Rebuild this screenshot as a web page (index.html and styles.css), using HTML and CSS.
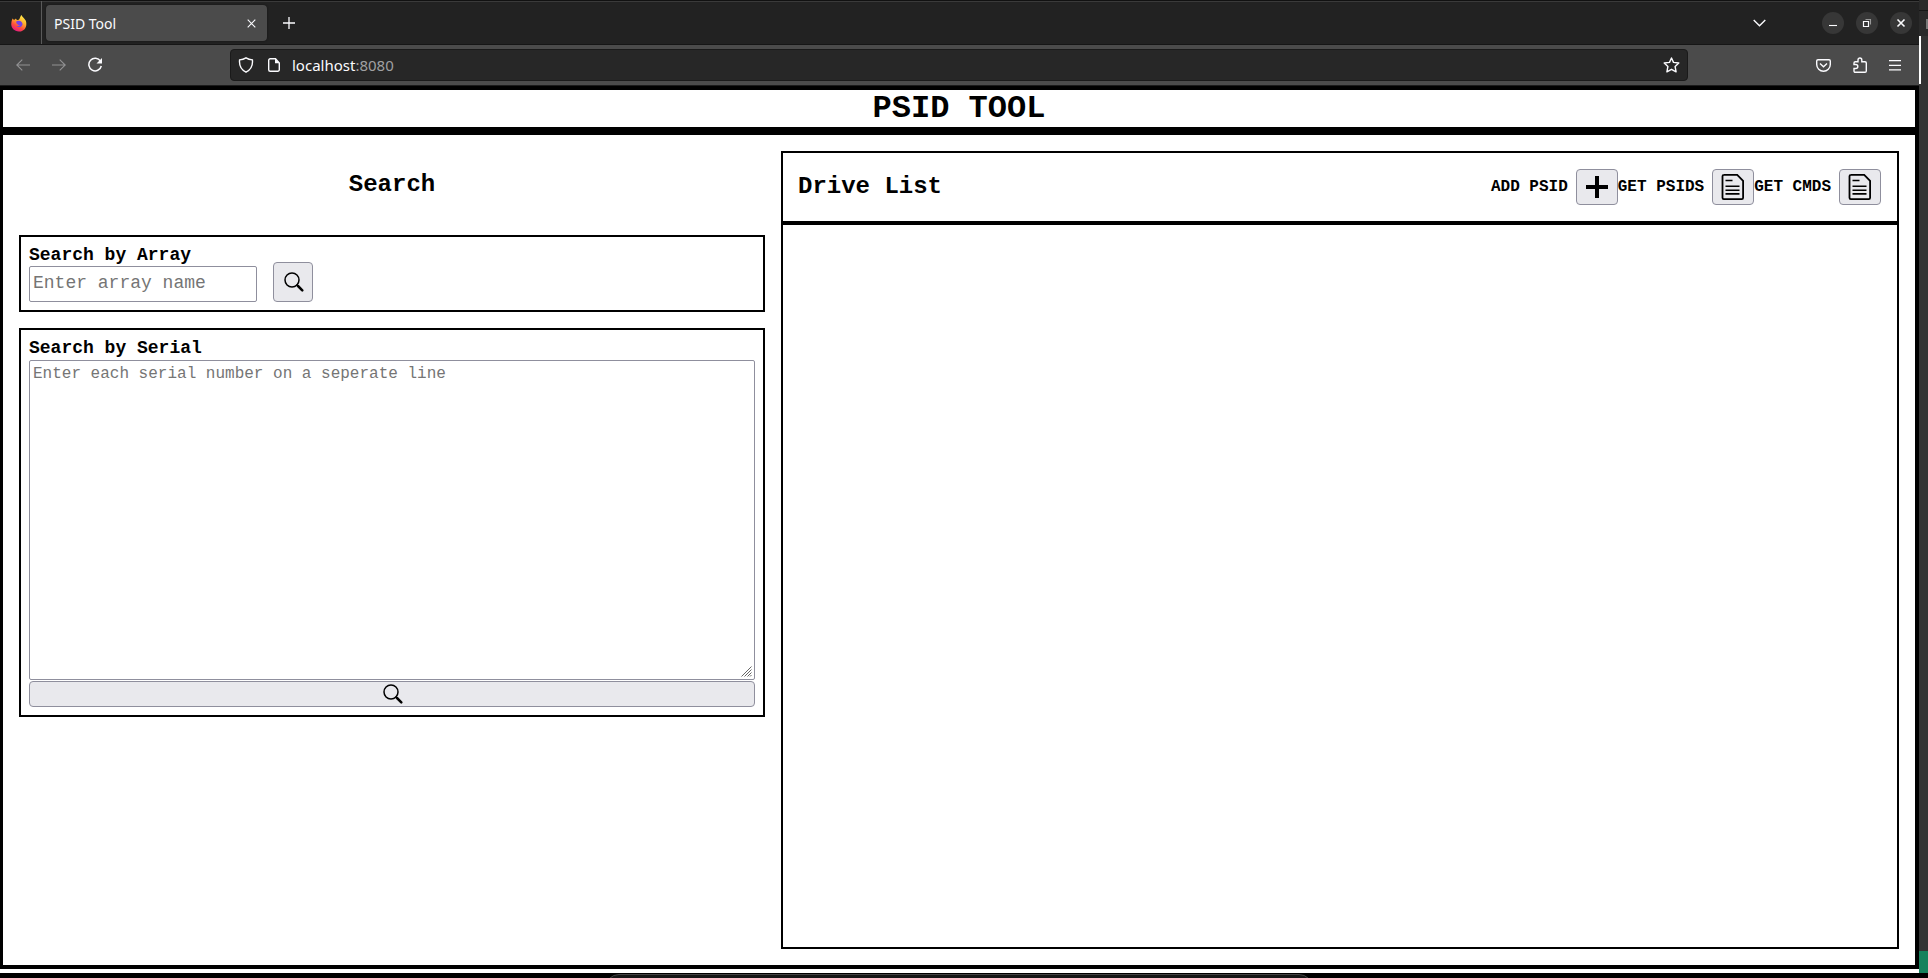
FILE: index.html
```html
<!DOCTYPE html>
<html lang="en">
<head>
<meta charset="utf-8">
<title>PSID Tool</title>
<link rel="stylesheet" href="styles.css">
</head>
<body>
<div class="screen">
<div class="desktop">
  <div class="window">
    <div class="tabbar">
      <div class="pinned">
        <svg width="16" height="17" viewBox="0 0 16 17"><defs><linearGradient id="fx" x1=".8" y1="0" x2=".3" y2="1"><stop offset="0" stop-color="#fff44f"/><stop offset=".4" stop-color="#ffb02a"/><stop offset=".7" stop-color="#ff4f3b"/><stop offset="1" stop-color="#e31587"/></linearGradient></defs><path d="M1.6 3.6 3 5l2-1.600C5.200 4.500 6 5 7 5c2 0 1.500-3 3.500-5 .4 2 3 3 4.200 5.600C16.500 10 14.500 16.300 8.300 16.500 3 16.700-.2 12.500.3 8.500.4 6.500.9 5 1.600 3.600Z" fill="url(#fx)"/><path d="M5.500 6.200c3.500-1.500 6.400.8 6 3.400-.5 2.800-4.500 3.500-6.200 1.200 1.500.5 2.900.1 3.700-.9-1.500.2-2.200-.4-3-1.200-.6-.7-1.200-1.600-.5-2.500Z" fill="#7542e5"/></svg>
      </div>
      <div class="tab"><span>PSID Tool</span>
        <svg width="9" height="9" viewBox="0 0 9 9" class="ln"><path d="M.7.7l7.600 7.600M8.300.7.700 8.300"/></svg>
      </div>
      <svg class="ln newtab" width="12" height="12" viewBox="0 0 12 12"><path d="M6 0v12M0 6h12" stroke-width="1.300"/></svg>
      <div class="controls">
        <svg class="ln chev" width="13" height="8" viewBox="0 0 13 8"><path d="M.7 1l5.800 5.700L12.300 1" stroke-width="1.400"/></svg>
        <div class="round"><svg class="ln" width="22" height="22"><path d="M7 13.500h8"/></svg></div>
        <div class="round"><svg class="ln" width="22" height="22"><path d="M9.500 7.500h5v5" stroke="#999"/><path d="M7.500 9.500h5v5h-5z" stroke-width="1.200"/></svg></div>
        <div class="round"><svg class="ln" width="22" height="22"><path d="M7.500 7.500l7 7M14.500 7.500l-7 7" stroke-width="1.600"/></svg></div>
      </div>
    </div>
    <div class="toolbar">
      <svg class="ln dim back" width="14" height="12" viewBox="0 0 14 12"><path d="M14 6H.7M6.300.6.800 6l5.500 5.400"/></svg>
      <svg class="ln dim fwd" width="14" height="12" viewBox="0 0 14 12"><path d="M0 6h13.300M7.700.6l5.500 5.400-5.500 5.400"/></svg>
      <svg class="ln reload" width="15" height="16" viewBox="0 0 15 16"><path d="M12.500 4.200A6.300 6.300 0 1 0 13.300 9" stroke-width="1.500"/><path d="M14 1v5.500H8.500z" fill="#fbfbfe" stroke="none"/></svg>
      <div class="urlbar">
        <svg class="ln" width="16" height="16" viewBox="0 0 16 16"><path d="M8 .8c2 1.300 4.100 1.900 6.400 2.100.6 5.500-1.800 10-6.400 12.300C3.400 12.900 1 8.400 1.600 2.900 3.900 2.700 6 2.100 8 .8Z" stroke-width="1.400"/></svg>
        <svg class="ln page" width="12" height="14" viewBox="0 0 12 14"><path d="M7.500.7H2.200A1.500 1.500 0 0 0 .7 2.200v9.600a1.500 1.500 0 0 0 1.500 1.500h7.600a1.500 1.500 0 0 0 1.500-1.500V5z" stroke-width="1.400"/><path d="M7 .5 11.700 5.300H7z" fill="#fbfbfe" stroke="none"/></svg>
        <span class="url">localhost<i>:8080</i></span>
        <svg class="ln star" width="17" height="16" viewBox="0 0 17 16"><path d="M8.500 1l2 4.400 5.300.6-3.700 3.500 1 5.300-4.600-2.500-4.600 2.500 1-5.300L1.200 6l5.300-.6z" stroke-width="1.400" stroke-linejoin="round"/></svg>
      </div>
      <div class="tools">
        <svg class="ln" width="15" height="13" viewBox="0 0 15 13"><path d="M2 .7h11q1.300 0 1.300 1.300v3.500a6.800 6.800 0 0 1-13.600 0V2Q.7.7 2 .7Z" stroke-width="1.400"/><path d="M4 4.500l3.500 3.300L11 4.500" stroke-width="1.400"/></svg>
        <svg class="ln" width="14" height="16" viewBox="0 0 14 16"><path d="M1 7.500V6q0-1.300 1.300-1.300H5V2.900a1.900 1.900 0 0 1 3.800 0v1.800h3.200q1.300 0 1.300 1.300v8q0 1.300-1.300 1.300H2.300Q1 15.300 1 14v-2.500h1.800a2 2 0 0 0 0-4z" stroke-width="1.400"/></svg>
        <svg class="ln" width="12" height="11" viewBox="0 0 12 11"><path d="M0 .7h12M0 5.300h12M0 9.900h12" stroke-width="1.200"/></svg>
      </div>
    </div>
    <div class="page-body">
      <h1 class="title">PSID TOOL</h1>
      <main class="main">
        <section class="left">
          <h2 class="search-title">Search</h2>
          <div class="box array">
            <label class="label">Search by Array</label>
            <div class="row">
              <input class="field" placeholder="Enter array name">
              <button class="btn square"><svg width="20" height="20" viewBox="0 0 20 20" fill="none" stroke="#000"><circle cx="8" cy="8" r="7" stroke-width="1.500"/><path d="M12.500 12.500l1.800 1.800" stroke-width="1.500"/><path d="M14 14l4.300 4.300" stroke-width="2.500" stroke-linecap="round"/></svg></button>
            </div>
          </div>
          <div class="box serial">
            <label class="label">Search by Serial</label>
            <div class="area-wrap"><textarea class="area" placeholder="Enter each serial number on a seperate line"></textarea>
              <svg class="grip" width="11" height="11" viewBox="0 0 11 11"><path d="M.5 10.500l10-10M3.500 10.500l7-7M6.500 10.500l4-4M9 10.500l1.500-1.500" stroke="#666"/></svg></div>
            <button class="btn wide"><svg width="20" height="20" viewBox="0 0 20 20" fill="none" stroke="#000"><circle cx="8" cy="8" r="7" stroke-width="1.500"/><path d="M12.500 12.500l1.800 1.800" stroke-width="1.500"/><path d="M14 14l4.300 4.300" stroke-width="2.500" stroke-linecap="round"/></svg></button>
          </div>
        </section>
        <section class="drives">
          <header class="drive-head">
            <h2>Drive List</h2>
            <div class="actions">
              <span>ADD PSID</span><button class="btn act"><svg width="24" height="24" viewBox="0 0 24 24"><path d="M12 1v22M1 12h22" stroke="#000" stroke-width="4"/></svg></button>
              <span>GET PSIDS</span><button class="btn act"><svg width="24" height="28" viewBox="0 0 24 28" fill="none" stroke="#000"><path d="M2.500 1.900h13.700l5.900 5.900v17q0 1.300-1.300 1.300H2.800q-1.300 0-1.300-1.300V3.200q0-1.300 1.300-1.300Z" stroke-width="1.800"/><path d="M4.500 7.500h7M4.500 13.300h14M4.500 17.200h14M4.500 20.900h14" stroke-width="1.600"/></svg></button>
              <span>GET CMDS</span><button class="btn act"><svg width="24" height="28" viewBox="0 0 24 28" fill="none" stroke="#000"><path d="M2.500 1.900h13.700l5.900 5.900v17q0 1.300-1.300 1.300H2.800q-1.300 0-1.300-1.300V3.200q0-1.300 1.300-1.300Z" stroke-width="1.800"/><path d="M4.500 7.500h7M4.500 13.300h14M4.500 17.200h14M4.500 20.900h14" stroke-width="1.600"/></svg></button>
            </div>
          </header>
        </section>
      </main>
    </div>
    <div class="gap"></div>
  </div>
  <aside class="behind"><div class="b0"></div><div class="b1"><div class="chip"></div></div><div class="b2"></div><div class="b3"></div><div class="b4"></div></aside>
</div>
<div class="bottom"><div class="dock"></div></div>
</div>
</body>
</html>
```
FILE: styles.css
```css
* { box-sizing: border-box; }
body { margin: 0; background: #000; font-family: "Liberation Mono", monospace; color: #000; }
h1, h2 { margin: 0; }
svg { display: block; flex: none; }
.screen { width: 1928px; height: 978px; overflow: hidden; display: flex; flex-direction: column; }
.desktop { display: flex; height: 973px; }
.window { width: 1919px; display: flex; flex-direction: column; }
.ln { fill: none; stroke: #fbfbfe; stroke-width: 1.1; }
.dim { opacity: .4; }
.tabbar { height: 45px; background: #222; border-top: 1px solid #111; border-bottom: 1px solid #161616; box-shadow: inset 0 1px #3a3a3a; display: flex; align-items: center; font-family: "Noto Sans", sans-serif; color: #fbfbfe; }
.pinned { width: 42px; height: 43px; border-right: 1px solid #5a5a5a; padding: 14px 0 0 11px; }
.tab { width: 221px; height: 36px; margin-left: 4px; background: #4b4b4b; border-radius: 4px; display: flex; align-items: center; justify-content: space-between; padding: 1px 11px 0 8px; font-size: 14px; box-shadow: 0 0 2px #111; }
.newtab { margin-left: 16px; margin-top: 1px; }
.controls { margin-left: auto; display: flex; align-items: center; gap: 12px; padding-right: 7px; }
.chev { margin-right: 44px; }
.round { width: 22px; height: 22px; border-radius: 50%; background: #373737; }
.toolbar { height: 41px; background: #4b4b4b; border-bottom: 1px solid #1b1b1b; display: flex; align-items: center; }
.back { margin-left: 16px; }
.fwd { margin-left: 22px; }
.reload { margin-left: 22px; }
.urlbar { margin-left: 127px; width: 1458px; height: 32px; background: #272727; border: 1px solid #1a1a1a; border-radius: 4px; display: flex; align-items: center; padding: 0 7px; font-family: "Noto Sans", sans-serif; font-size: 15px; color: #fbfbfe; }
.page { margin-left: 14px; }
.url { margin-left: 12px; }
.url i { font-style: normal; color: #a0a0a2; }
.star { margin-left: auto; }
.tools { margin-left: auto; display: flex; gap: 22px; align-items: center; padding-right: 18px; }
.page-body { height: 883px; background: #fff; border: solid #000; border-width: 4px 4px 4px 3px; display: flex; flex-direction: column; }
.title { height: 45px; border-bottom: 8px solid #000; font-size: 32px; line-height: 37px; text-align: center; }
.main { flex: 1; display: flex; gap: 16px; padding: 16px; }
.left { width: 746px; display: flex; flex-direction: column; }
.search-title { height: 84px; font-size: 24px; line-height: 67px; text-align: center; }
.box { border: 2px solid #000; padding: 8px; }
.array { height: 77px; margin-bottom: 16px; }
.serial { height: 389px; }
.label { display: block; font-size: 18px; font-weight: bold; line-height: 20px; height: 20px; }
.row { display: flex; align-items: flex-end; gap: 16px; height: 37px; }
.field { width: 228px; height: 36px; border: 1px solid #8f8f9d; border-radius: 2px; padding: 0 3px 2px; font: 18px "Liberation Mono", monospace; outline: none; }
.field::placeholder, .area::placeholder { color: #757575; opacity: 1; }
.btn { background: #e9e9ed; border: 1px solid #8f8f9d; border-radius: 4px; padding: 0; display: flex; align-items: center; justify-content: center; }
.square { width: 40px; height: 40px; margin-top: -4px; padding-left: 1px; flex: none; }
.area-wrap { display: flex; position: relative; margin-top: 2px; }
.area { width: 726px; height: 320px; border: 1px solid #8f8f9d; border-radius: 2px; padding: 4px 3px 3px; font: 16px/18px "Liberation Mono", monospace; resize: none; outline: none; }
.grip { position: absolute; right: 3px; bottom: 3px; }
.wide { width: 726px; height: 26px; margin-top: 1px; padding-left: 2px; }
.drives { width: 1118px; border: 2px solid #000; }
.drive-head { height: 72px; border-bottom: 4px solid #000; display: flex; justify-content: space-between; align-items: center; padding: 0 16px 0 15px; }
.drive-head h2 { font-size: 24px; line-height: 28px; }
.actions { display: flex; align-items: center; font-size: 16px; font-weight: bold; }
.actions span { margin-right: 8px; }
.act { width: 42px; height: 36px; }
.gap { height: 4px; background: #fff; }
.behind { width: 9px; background: #333; display: flex; flex-direction: column; }
.b0 { height: 11px; background: #2a2a2a; border-bottom: 1px solid #161616; }
.b1 { height: 25px; background: #2a2a2a; padding: 8px 0 0 7px; }
.chip { width: 2px; height: 10px; background: #777; }
.b2 { height: 48px; width: 2px; background: #fff; }
.b3 { flex: 1; }
.b4 { height: 22px; background: #16825d; }
.bottom { height: 5px; background: #000; overflow: hidden; display: flex; }
.dock { width: 708px; height: 60px; margin: 1px 0 0 605px; border: 1px solid #444; border-radius: 14px; background: #161616; flex: none; }
```
